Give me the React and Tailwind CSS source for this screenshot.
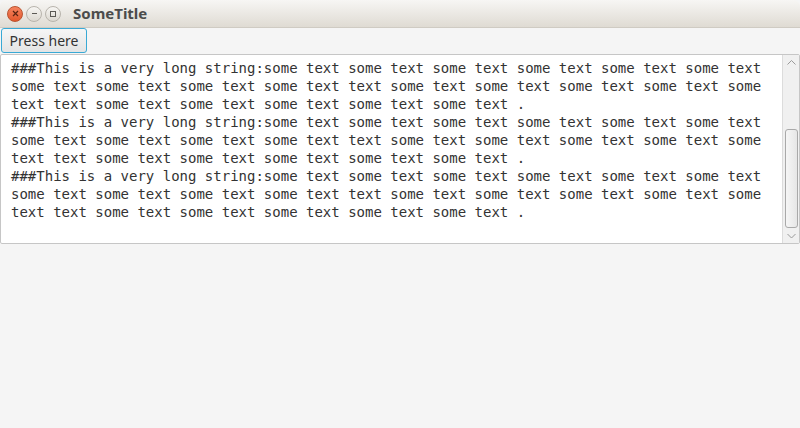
const LINES = [
  "###This is a very long string:some text some text some text some text some text some text",
  "some text some text some text some text text some text some text some text some text some",
  "text text some text some text some text some text some text .",
];

function WinButton({ kind }) {
  if (kind === "close") {
    return (
      <div className="w-[16px] h-[16px] rounded-full bg-gradient-to-b from-[#f5835e] to-[#e3572b] border border-[#b9532f] flex items-center justify-center">
        <svg width="7" height="7" viewBox="0 0 7 7">
          <path d="M1 1L6 6M6 1L1 6" stroke="#5a2412" strokeWidth="1.2" />
        </svg>
      </div>
    );
  }
  return (
    <div className="w-[16px] h-[16px] rounded-full bg-gradient-to-b from-[#f7f6f3] to-[#dcd8d0] border border-[#b8b4ac] flex items-center justify-center">
      {kind === "min" ? (
        <svg width="7" height="7" viewBox="0 0 7 7">
          <path d="M1 3.5H6" stroke="#5c5a55" strokeWidth="1" />
        </svg>
      ) : (
        <svg width="8" height="8" viewBox="0 0 8 8">
          <rect x="1.5" y="1.5" width="5" height="5" fill="none" stroke="#5c5a55" strokeWidth="1" />
        </svg>
      )}
    </div>
  );
}

export default function App() {
  const rows = [...LINES, ...LINES, ...LINES];
  return (
    <div className="w-[800px] h-[428px] bg-[#f5f5f5] flex flex-col overflow-hidden" style={{ fontFamily: '"Noto Sans", sans-serif' }}>
      <div className="h-[28px] flex items-center rounded-t-[6px] bg-gradient-to-b from-[#f7f6f4] to-[#dfdbd3] border-b border-[#cfcbc3] pl-[7px]">
        <div className="flex items-center gap-[3px]">
          <WinButton kind="close" />
          <WinButton kind="min" />
          <WinButton kind="max" />
        </div>
        <span className="ml-[12px] text-[15px] font-bold text-[#4c4c4c]">SomeTitle</span>
      </div>
      <div className="h-[26px] flex items-start">
        <button className="h-[25px] w-[86px] ml-[1px] rounded-[3px] border border-[#39a9d5] bg-gradient-to-b from-[#f6f6f6] to-[#e4e4e4] text-[14px] text-[#333] leading-none">
          Press here
        </button>
      </div>
      <div className="h-[190px] bg-white border border-[#c6c6c6] rounded-[2px] flex">
        <div className="flex-1 pl-[10px] pt-[4px] text-[14px] leading-[18px] text-[#333] whitespace-pre" style={{ fontFamily: '"DejaVu Sans Mono", monospace' }}>
          {rows.map((l, i) => (
            <div key={i}>{l}</div>
          ))}
        </div>
        <div className="w-[17px] bg-[#f0f0f0] border-l border-[#dcdcdc] flex flex-col items-center">
          <svg width="11" height="10" viewBox="0 0 11 10" className="mt-[3px]">
            <path d="M1.5 6.5L5.5 2.5L9.5 6.5" fill="none" stroke="#9a9a9a" strokeWidth="1" />
          </svg>
          <div className="flex-1 w-full" />
          <div className="w-[13px] h-[99px] rounded-[3px] border border-[#a9a9a9] bg-gradient-to-r from-[#f6f6f6] to-[#e6e6e6]" />
          <svg width="11" height="10" viewBox="0 0 11 10" className="mt-[3px] mb-[2px]">
            <path d="M1.5 3L5.5 7L9.5 3" fill="none" stroke="#9a9a9a" strokeWidth="1" />
          </svg>
        </div>
      </div>
    </div>
  );
}
